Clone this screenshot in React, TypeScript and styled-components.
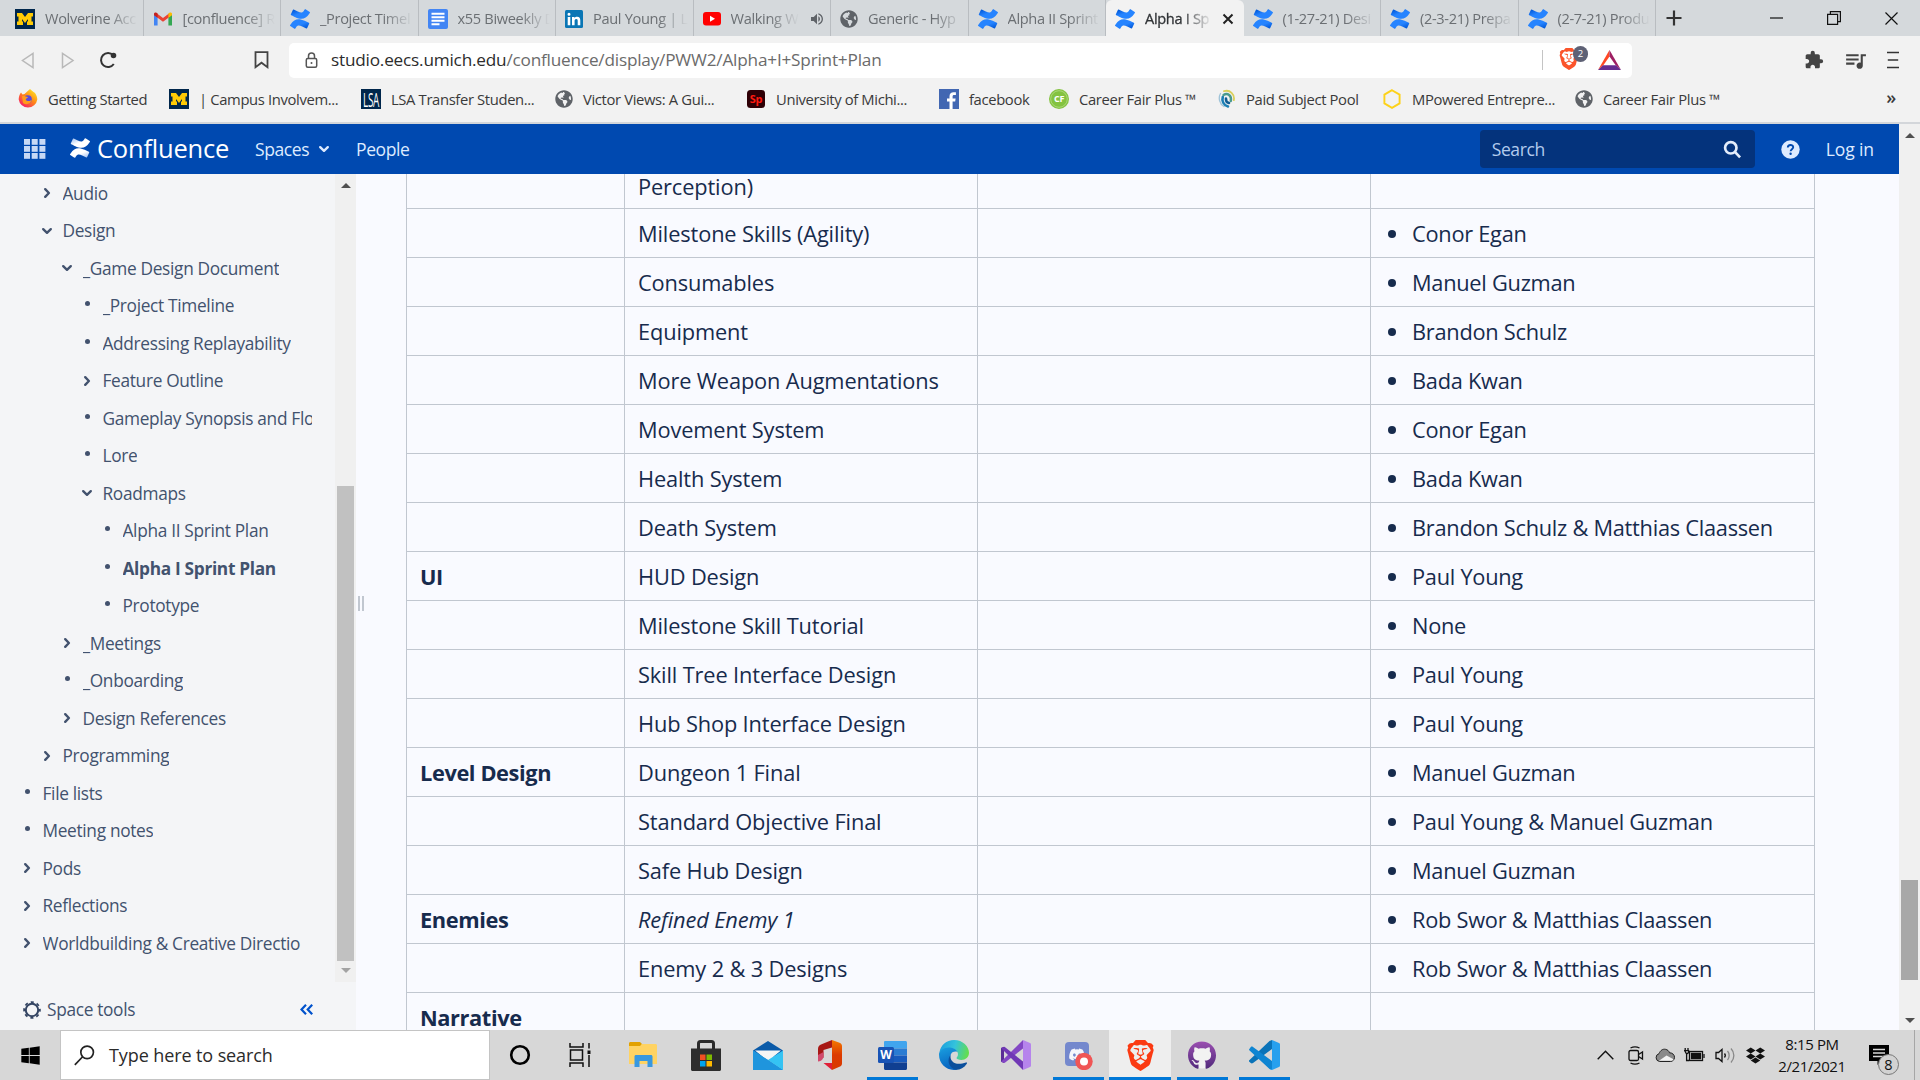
import React from 'react';
import styled, { createGlobalStyle, css } from 'styled-components';
import { FaDropbox, FaDiscord, FaWindows, FaGlobeAmericas } from 'react-icons/fa';
import { MdExtension, MdQueueMusic, MdVolumeUp } from 'react-icons/md';
import { SiBrave } from 'react-icons/si';

const Global = createGlobalStyle`
  * { box-sizing: border-box; }
  body { margin: 0; overflow: hidden; }
  svg { display: block; flex: none; }
`;

const Screen = styled.div`
  width: 1920px;
  height: 1080px;
  display: flex;
  flex-direction: column;
  overflow: hidden;
  font-family: 'Open Sans', 'Noto Sans', sans-serif;
  white-space: nowrap;
  color: #172b4d;
`;

/* ---------- browser chrome ---------- */

const TabStrip = styled.div`
  height: 36px;
  flex: none;
  display: flex;
  background: #d5d9dc;
  padding-left: 6px;
`;

const TabBox = styled.div<{ $active?: boolean }>`
  width: 137.5px;
  flex: none;
  display: flex;
  align-items: center;
  padding: 2px 5px 0 9px;
  border-right: 1px solid #b9bdc1;
  font-size: 14.6px;
  letter-spacing: -0.33px;
  color: #6b6f73;
  ${p => p.$active && css`
    background: #f2f2f2;
    border-radius: 6px 6px 0 0;
    border-right-color: transparent;
    color: #303336;
    padding-right: 9px;
  `}
`;

const TabTitle = styled.span<{ $active?: boolean; $short?: boolean }>`
  flex: 1;
  min-width: 0;
  margin: -2px ${p => (p.$short ? 10 : 0)}px 0 10px;
  overflow: hidden;
  -webkit-text-stroke: ${p => (p.$active ? '0.3px #303336' : '0')};
  mask-image: linear-gradient(to right, #000 calc(100% - 30px), transparent);
`;

const NewTab = styled.div`
  width: 36px;
  display: flex;
  align-items: center;
  justify-content: center;
`;

const WindowButtons = styled.div`
  margin-left: auto;
  display: flex;
  align-items: center;
`;

const WindowButton = styled.div`
  width: 57.5px;
  height: 36px;
  display: flex;
  align-items: center;
  justify-content: center;
`;

const Toolbar = styled.div`
  height: 48px;
  flex: none;
  display: flex;
  align-items: center;
  background: #f2f2f2;
`;

const NavIcons = styled.div`
  width: 289px;
  display: flex;
  align-items: center;
  padding-left: 20px;
`;

const NavSlot = styled.div<{ $w: number }>`
  width: ${p => p.$w}px;
`;

const Address = styled.div`
  width: 1343px;
  height: 35px;
  display: flex;
  align-items: center;
  background: #fff;
  border-radius: 5px;
  padding: 0 11px 0 16px;
`;

const Url = styled.div`
  flex: 1;
  margin: -2px 0 0 13px;
  font-size: 17.2px;
  letter-spacing: -0.2px;
  color: #6b6b6b;
  b { font-weight: 400; color: #2c2c2c; }
`;

const AddressRule = styled.div`
  width: 1px;
  height: 20px;
  background: #c4c4c4;
  margin-right: 15px;
`;

const ShieldBox = styled.div`
  position: relative;
  width: 40px;
  height: 24px;
`;

const ShieldCount = styled.span`
  position: absolute;
  left: 15px;
  top: -2px;
  width: 15px;
  height: 16px;
  border-radius: 8px;
  background: #5e6175;
  color: #fff;
  font-size: 9.5px;
  line-height: 16px;
  text-align: center;
`;

const ToolRight = styled.div`
  flex: 1;
  display: flex;
  align-items: center;
  justify-content: flex-end;
  gap: 19px;
  padding-right: 21px;
  color: #444;
`;

const Bookmarks = styled.div`
  height: 40px;
  flex: none;
  display: flex;
  align-items: center;
  background: #f2f2f2;
  border-bottom: 2px solid #d3d6da;
  padding: 0 0 8px 18px;
  font-size: 14.8px;
  letter-spacing: -0.36px;
  color: #3a3a3a;
`;

const BookmarkItem = styled.div<{ $w: number }>`
  width: ${p => p.$w}px;
  flex: none;
  display: flex;
  align-items: center;
  gap: 10px;
`;

const More = styled.div`
  margin-left: auto;
  padding-right: 24px;
  font-size: 18px;
  font-weight: 600;
  line-height: 18px;
  margin-top: -5px;
`;

/* ---------- confluence header ---------- */

const Body = styled.div`
  height: 906px;
  flex: none;
  display: flex;
`;

const Page = styled.div`
  width: 1899px;
  display: flex;
  flex-direction: column;
`;

const Header = styled.div`
  height: 50px;
  flex: none;
  display: flex;
  align-items: center;
  background: #0049b0;
  color: #deebff;
  padding: 0 25px 0 24px;
  font-size: 17.500px;
  letter-spacing: -0.4px;
`;

const Brand = styled.div`
  width: 185px;
  display: flex;
  align-items: center;
  gap: 7px;
  margin: -2px 0 0 24px;
  color: #fff;
  font-size: 25.5px;
  letter-spacing: -0.2px;
  line-height: 30px;
`;

const MenuItem = styled.div<{ $w: number }>`
  width: ${p => p.$w}px;
  display: flex;
  align-items: center;
  gap: 9px;
`;

const SearchBox = styled.div`
  width: 275px;
  height: 38px;
  margin-left: auto;
  display: flex;
  align-items: center;
  justify-content: space-between;
  background: #04337c;
  border-radius: 4px;
  padding: 0 13px 0 12px;
  color: #b3cbed;
`;

const Help = styled.div`
  margin: 0 26px;
`;

const LogIn = styled.div`
  letter-spacing: -0.1px;
`;

/* ---------- sidebar ---------- */

const Main = styled.div`
  flex: 1;
  min-height: 0;
  display: flex;
  background: #f9faff;
`;

const Sidebar = styled.div`
  width: 356px;
  flex: none;
  display: flex;
  flex-direction: column;
  background: #f4f5f7;
  color: #42526e;
  font-size: 17.3px;
  letter-spacing: -0.32px;
`;

const TreeArea = styled.div`
  height: 808px;
  display: flex;
`;

const Tree = styled.div`
  width: 335px;
  overflow: hidden;
  padding-top: 0.5px;
`;

const TreeRow = styled.div<{ $level: number; $bold?: boolean }>`
  height: 37.5px;
  display: flex;
  align-items: center;
  padding-left: ${p => 19.5 + p.$level * 20}px;
  font-weight: ${p => (p.$bold ? 700 : 400)};
`;

const Marker = styled.div`
  width: 15px;
  margin-right: 8px;
  display: flex;
  justify-content: center;
`;

const Dot = styled.div`
  width: 5px;
  height: 5px;
  border-radius: 50%;
  background: #42526e;
  margin-bottom: 4px;
`;

const TreeText = styled.div<{ $w?: number }>`
  overflow: hidden;
  width: ${p => (p.$w ? p.$w + 'px' : 'auto')};
`;

const Track = styled.div`
  width: 21px;
  flex: none;
  display: flex;
  flex-direction: column;
  align-items: center;
  background: #f0f0f0;
`;

const Gap = styled.div<{ $h: number }>`
  height: ${p => p.$h}px;
  display: flex;
  align-items: center;
`;

const Thumb = styled.div<{ $h: number; $c: string }>`
  width: 17px;
  height: ${p => p.$h}px;
  background: ${p => p.$c};
`;

const Arrow = styled.div<{ $up?: boolean; $c: string }>`
  border: 5px solid transparent;
  ${p => (p.$up ? `border-bottom: 5px solid ${p.$c}; border-top: 0;` : `border-top: 5px solid ${p.$c}; border-bottom: 0;`)}
`;

const SpaceTools = styled.div`
  flex: 1;
  display: flex;
  align-items: center;
  padding: 7px 43px 0 23px;
`;

const ToolsLabel = styled.span`
  margin: -1px 0 0 6px;
  flex: 1;
`;

const Splitter = styled.div`
  width: 50px;
  flex: none;
  padding: 422px 0 0 2px;
`;

const Grip = styled.div`
  width: 6px;
  height: 15px;
  border: solid #c1c7d0;
  border-width: 0 2px;
`;

/* ---------- table ---------- */

const Table = styled.div`
  width: 1409px;
  height: 856px;
  overflow: hidden;
  display: flex;
  flex-direction: column;
  border-left: 1px solid #c1c7d0;
  font-size: 21.8px;
`;

const Row = styled.div<{ $h?: number }>`
  height: ${p => p.$h || 49}px;
  flex: none;
  display: grid;
  grid-template-columns: 218px 353px 393px 444px;
  border-bottom: 1px solid #c1c7d0;
`;

const Cell = styled.div<{ $bold?: boolean; $italic?: boolean }>`
  border-right: 1px solid #c1c7d0;
  padding: 1px 0 0 13px;
  display: flex;
  align-items: center;
  min-height: 0;
  font-weight: ${p => (p.$bold ? 700 : 400)};
  font-style: ${p => (p.$italic ? 'italic' : 'normal')};
  letter-spacing: ${p => (p.$bold ? -0.4 : -0.14)}px;
`;

const OwnerCell = styled(Cell)`
  letter-spacing: -0.27px;
`;

const CutCell = styled(Cell)`
  align-items: flex-end;
  padding-bottom: 7px;
`;

const Bullet = styled.span`
  width: 8px;
  height: 8px;
  border-radius: 50%;
  background: #172b4d;
  margin: 0 16px 0 4px;
`;

/* ---------- taskbar ---------- */

const Taskbar = styled.div`
  height: 50px;
  flex: none;
  display: flex;
  background: #d7d7d7;
  color: #111;
`;

const Start = styled.div`
  width: 60px;
  display: flex;
  align-items: center;
  justify-content: center;
`;

const TaskSearch = styled.div`
  width: 430px;
  height: 50px;
  display: flex;
  align-items: center;
  gap: 14px;
  background: #fff;
  border: 1px solid #c4c4c4;
  padding-left: 13px;
  font-size: 18px;
  letter-spacing: -0.1px;
  color: #2b2b2b;
`;

const Apps = styled.div`
  display: flex;
`;

const TaskApp = styled.div<{ $active?: boolean; $running?: boolean; $w?: number }>`
  width: ${p => p.$w || 62}px;
  height: 50px;
  display: flex;
  align-items: center;
  justify-content: center;
  background-color: ${p => (p.$active ? '#eeeeee' : 'transparent')};
  background-image: ${p => (p.$running || p.$active ? 'linear-gradient(#0078d7, #0078d7)' : 'none')};
  background-size: ${p => (p.$active ? '62px' : '51px')} 3px;
  background-position: center bottom;
  background-repeat: no-repeat;
`;

const Tray = styled.div`
  margin-left: auto;
  display: flex;
  align-items: center;
`;

const TraySlot = styled.div<{ $w: number }>`
  width: ${p => p.$w}px;
  display: flex;
  justify-content: center;
`;

const Clock = styled.div`
  width: 84px;
  text-align: center;
  font-size: 15px;
  line-height: 22.5px;
  letter-spacing: -0.4px;
`;

const Notices = styled.div`
  position: relative;
  width: 60px;
  height: 50px;
  padding: 15px 0 0 15px;
`;

const NoticeCount = styled.span`
  position: absolute;
  left: 24px;
  top: 24px;
  width: 21px;
  height: 21px;
  border: 1px solid #777;
  border-radius: 50%;
  background: #d2d2d2;
  font-size: 14.5px;
  font-weight: 500;
  line-height: 19px;
  text-align: center;
`;

const ShowDesktop = styled.div`
  width: 6px;
  height: 50px;
  border-left: 1px solid #a6a6a6;
`;

/* ---------- icons ---------- */

const ConfluenceMark = ({ size = 20, from = '#0057d8', to = '#2684ff', id = 'cf' }) => (
  <svg width={size} height={size} viewBox="0 0 24 24">
    <defs>
      <linearGradient id={id + 'a'} x1="1" y1="1" x2="0.2" y2="0"><stop offset="0" stopColor={to} /><stop offset="0.6" stopColor={to} /><stop offset="1" stopColor={from} /></linearGradient>
      <linearGradient id={id + 'b'} x1="0" y1="0" x2="0.8" y2="1"><stop offset="0" stopColor={to} /><stop offset="0.6" stopColor={to} /><stop offset="1" stopColor={from} /></linearGradient>
    </defs>
    <path fill={`url(#${id}b)`} d="M.87 18.257c-.248.382-.53.875-.763 1.245a.764.764 0 0 0 .255 1.04l4.965 3.054a.764.764 0 0 0 1.058-.26c.199-.332.454-.763.733-1.221 1.967-3.247 3.945-2.853 7.508-1.146l4.957 2.337a.764.764 0 0 0 1.028-.382l2.364-5.346a.764.764 0 0 0-.382-1 599.851 599.851 0 0 1-4.965-2.361C10.911 10.97 5.224 11.185.87 18.257z" />
    <path fill={`url(#${id}a)`} d="M23.131 5.743c.249-.405.531-.875.764-1.25a.764.764 0 0 0-.256-1.034L18.675.404a.764.764 0 0 0-1.058.26c-.195.335-.451.763-.734 1.225-1.966 3.246-3.945 2.85-7.508 1.146L4.437.694a.764.764 0 0 0-1.027.382L1.046 6.422a.764.764 0 0 0 .382 1c1.039.49 3.105 1.467 4.965 2.361 6.698 3.246 12.392 3.029 16.738-4.04z" />
  </svg>
);

const BlockM = () => (
  <svg width="20" height="20" viewBox="0 0 20 20">
    <path fill="#00274c" d="M0 0h20v20H0z" />
    <path fill="#ffcb05" d="M2 4h5l3 4 3-4h5v3.5h-1.500v5H18V16h-6v-3.500h1V10l-3 4-3-4v2.500h1V16H2v-3.500h1.500v-5H2z" />
  </svg>
);

const Lsa = () => (
  <svg width="20" height="20" viewBox="0 0 20 20">
    <path fill="#00274c" d="M0 0h20v20H0z" />
    <text transform="translate(10 18) scale(.62 1.300)" textAnchor="middle" fontFamily="Open Sans" fontSize="16" fontWeight="500" letterSpacing="-0.5" fill="#fff">LSA</text>
  </svg>
);

const SpIcon = () => (
  <svg width="19" height="18" viewBox="0 0 19 18">
    <rect width="18" height="18" rx="3.500" fill="#2e0006" />
    <text x="9" y="13" textAnchor="middle" fontFamily="Open Sans" fontSize="11" fontWeight="700" letterSpacing="-0.3" fill="#ff1a10">Sp</text>
  </svg>
);

const FacebookF = () => (
  <svg width="20" height="20" viewBox="0 0 20 20">
    <path fill="#4267b2" d="M0 0h20v20H0z" />
    <path fill="#fff" d="M10.500 20v-7.600H8V9.400h2.500V7.200c0-2.600 1.600-4 4-4 1.100 0 2.100.1 2.400.1v2.800h-1.700c-1.300 0-1.600.6-1.600 1.500v1.800h3l-.4 3h-2.600V20z" />
  </svg>
);

const CareerFair = () => (
  <svg width="20" height="20" viewBox="0 0 20 20">
    <circle cx="10" cy="10" r="10" fill="#84c340" /><circle cx="10" cy="10" r="8.300" fill="none" stroke="#b4dc87" strokeWidth=".8" />
    <text x="10" y="13.400" textAnchor="middle" fontFamily="Open Sans" fontSize="9" fontWeight="700" letterSpacing="-0.3" fill="#fff">CF</text>
  </svg>
);

const Gmail = () => (
  <svg width="20" height="20" viewBox="0 0 20 20">
    <path fill="#4285f4" d="M1 5v11.500h3.600V8z" />
    <path fill="#34a853" d="M19 5v11.500h-3.600V8z" />
    <path fill="#ea4335" d="M1 5.500 3 3.800 10 9l7-5.200 2 1.700-3.600 3.300L10 12.800 4.600 8.800z" />
    <path fill="#c5221f" d="M1 5c0-1.700 2-2 3.600-.6V8.800L1 6.200z" />
    <path fill="#fbbc04" d="M19 5c0-1.700-2-2-3.600-.6V8.800L19 6.200z" />
  </svg>
);

const Docs = () => (
  <svg width="20" height="20" viewBox="0 0 20 20">
    <rect width="20" height="20" rx="2" fill="#4285f4" />
    <path stroke="#fff" strokeWidth="1.900" d="M3.500 4.800h13M3.500 8.300h13M3.500 11.800h13M3.500 15.300h8" />
  </svg>
);

const LinkedIn = () => (
  <svg width="18" height="18" viewBox="0 0 18 18">
    <rect width="18" height="18" rx="1.500" fill="#0a76b5" />
    <path fill="#fff" d="M2.700 7h2.600v8.300H2.700zM4 2.700a1.500 1.500 0 1 1 0 3 1.500 1.500 0 0 1 0-3zM7 7h2.500v1.200c.5-.9 1.500-1.400 2.600-1.400 2.500 0 3.200 1.600 3.200 3.800v4.700h-2.600v-4.200c0-1.200-.2-2.100-1.500-2.100s-1.600 1-1.600 2.100v4.200H7z" />
  </svg>
);

const YouTube = () => (
  <svg width="18" height="20" viewBox="0 0 18 20">
    <rect y="3" width="18" height="13.500" rx="3" fill="#f00" />
    <path fill="#fff" d="M7 6.800v6l5-3z" />
  </svg>
);

const Firefox = () => (
  <svg width="20" height="20" viewBox="0 0 20 20">
    <defs><linearGradient id="ff" x1="0.9" y1="0.1" x2="0.2" y2="1"><stop offset="0" stopColor="#ffe226" /><stop offset="0.45" stopColor="#ff8a16" /><stop offset="1" stopColor="#f5156c" /></linearGradient></defs>
    <path fill="url(#ff)" d="M12 0c1.500 1.500 3 2.500 5 4 1.300 1.700 2.300 4 2.300 6.500A9.400 9.400 0 0 1 .7 10.500C.7 8 1.500 5.500 3 3.500l1.500 2 2-.5z" />
    <circle cx="9.800" cy="10.200" r="4" fill="#5b4bdb" />
    <path fill="#ff9b1a" d="M4 7.500c2-1 4 .2 6 .6-.3 1.200-2 1.300-2.300 2.300 1 2.300 4.300 2 6 .4-.6 4-5.500 5.700-8.700 3.200z" />
  </svg>
);

const Hexagon = () => (
  <svg width="20" height="20" viewBox="0 0 20 20"><path fill="none" stroke="#fdd21a" strokeWidth="1.900" d="M10 1.200 17.600 5.600v8.800L10 18.800 2.400 14.400V5.600z" /></svg>
);

const Swirl = () => (
  <svg width="18" height="20" viewBox="0 0 18 20" fill="none" strokeLinecap="round">
    <path stroke="#9fc3d8" strokeWidth="1.300" d="M2.500 4.500C0 9 1.500 15 6 17.500" />
    <path stroke="#1c7fb4" strokeWidth="2.600" d="M4.800 8c-1.300 4 .8 8.200 5.200 9.500" />
    <path stroke="#d9cf5a" strokeWidth="1.800" d="M6 2.200c6-2 11 3.300 9.800 9" />
    <path stroke="#4b9a8e" strokeWidth="2.400" d="M5.500 6c4-2.500 8.500.5 7.300 6" />
    <path stroke="#115d94" strokeWidth="2.600" d="M8 9.500c-.3 2.300.8 4 3 4.500" />
  </svg>
);

const Chevron = ({ down = false, color = '#42526e' }) => (
  <svg width="12" height="12" viewBox="0 0 12 12" fill="none" stroke={color} strokeWidth="2.400" strokeLinecap="round" strokeLinejoin="round">
    <path d={down ? 'M2.200 4.200 6 7.800l3.800-3.600' : 'M4.200 2.200 7.900 6 4.200 9.800'} />
  </svg>
);

const AppGrid = () => (
  <svg width="22" height="20" viewBox="0 0 22 20" fill="#c6d8f5">
    {[0, 7, 14].map(y => [0, 7.7, 15.400].map(x => <rect key={x + '-' + y} x={x} y={y} width="6" height="5.800" />))}
  </svg>
);

const BraveTriangle = () => (
  <svg width="23" height="20" viewBox="0 0 23 20">
    <path fill="#ff4724" d="M11.500 0v6.500L5.500 15 0 20z" />
    <path fill="#9e1f63" d="M11.500 0 23 20l-5.500-5-6-8.500z" />
    <path fill="#662d91" d="M0 20l5-4.800h13L23 20z" />
  </svg>
);

const Folder = () => (
  <svg width="28" height="26" viewBox="0 0 28 26">
    <path fill="#e2a100" d="M0 1.500C0 .6.6 0 1.500 0H11l2 2-2 3.500H0z" />
    <path fill="#ffd363" d="M0 4h11l2-2h13.500c.9 0 1.500.6 1.500 1.500V22H0z" />
    <path fill="#3898e0" d="M5.500 25V14.500c0-1 .7-1.500 1.500-1.500h15c.8 0 1.500.6 1.500 1.500V25h-5v-6h-8v6z" />
  </svg>
);

const Store = () => (
  <svg width="30" height="31" viewBox="0 0 30 31">
    <path fill="none" stroke="#2b2b2b" strokeWidth="3" d="M7.500 9V3.500c0-1.200.8-2 2-2h11c1.200 0 2 .8 2 2V9" />
    <path fill="#2d2d2d" d="M0 8.500h30v21c0 .8-.7 1.500-1.500 1.500h-27C.7 31 0 30.300 0 29.500z" />
    <path fill="#f25022" d="M9 14.500h5.500V20H9z" /><path fill="#7fba00" d="M15.500 14.500H21V20h-5.500z" />
    <path fill="#00a4ef" d="M9 21h5.500v5.500H9z" /><path fill="#ffb900" d="M15.500 21H21v5.500h-5.500z" />
  </svg>
);

const Mail = () => (
  <svg width="30" height="29" viewBox="0 0 30 29">
    <path fill="#0a5aa8" d="M0 9.500 15 0l15 9.500-3 6H3z" />
    <path fill="#f5f5f5" d="M2 9.500h26L15 20z" />
    <path fill="#1a9de0" d="M0 9.500 15 19l15 10H0z" />
    <path fill="#35c3f3" d="M30 9.500 15 19l15 10z" />
    <path fill="#1f95dd" d="M0 9.500V29h30L15 19z" />
  </svg>
);

const Office = () => (
  <svg width="24" height="30" viewBox="0 0 24 30">
    <defs><linearGradient id="of" x1="0" y1="0" x2="0" y2="1"><stop offset="0" stopColor="#f47a00" /><stop offset="0.5" stopColor="#dc3a00" /><stop offset="1" stopColor="#d83b01" /></linearGradient></defs>
    <path fill="#a81815" d="M14 0 3 4.500C1 5.500 0 6.500 0 9v11.500l5.500-3V10L14 7.500z" />
    <path fill="#d14a6c" d="M0 15v6.500c2 0 4-.8 5.500-4V12z" />
    <path fill="url(#of)" d="m14 0 7.500 2.800C23 3.400 24 4.500 24 6v17.500c0 1.600-.8 2.700-2.500 3.200L14 30z" />
    <path fill="#e02038" d="M5.500 23H14v7z" />
  </svg>
);

const Word = () => (
  <svg width="29" height="29" viewBox="0 0 29 29">
    <path fill="#41a5ee" d="M7 0h20.500c.8 0 1.500.6 1.500 1.500V7.500H6V1.500C6 .6 6.400 0 7 0z" />
    <path fill="#2b7cd3" d="M6 7.500h23v7H6z" /><path fill="#185abd" d="M6 14.500h23v7H6z" />
    <path fill="#103f91" d="M6 21.500h23v6c0 .8-.6 1.500-1.500 1.500h-20C6.600 29 6 28.300 6 27.500z" />
    <rect y="6" width="16" height="16" rx="1.500" fill="#1853b5" />
    <text x="8" y="18.300" textAnchor="middle" fontFamily="Open Sans" fontSize="12" fontWeight="700" fill="#fff">W</text>
  </svg>
);

const Edge = () => (
  <svg width="30" height="30" viewBox="0 0 30 30">
    <defs>
      <linearGradient id="eg" x1="0" y1="0.3" x2="1" y2="0.5"><stop offset="0" stopColor="#1c9fdd" /><stop offset="0.5" stopColor="#34c3dc" /><stop offset="1" stopColor="#64de4c" /></linearGradient>
      <linearGradient id="eb" x1="0" y1="0" x2="0.3" y2="1"><stop offset="0" stopColor="#1aa0e0" /><stop offset="1" stopColor="#0864c0" /></linearGradient>
    </defs>
    <path fill="url(#eg)" d="M.5 12.500C1.500 5 7.500 0 15 0c9 0 15 6.500 15 12.800 0 4.500-3.500 7.200-7.500 7.200-3 0-5-.9-5-1.900 0-.8 1.500-1.300 1.500-4.100 0-3-3.300-5.500-7-5.500-5.500 0-9.500 1-11.500 4z" />
    <path fill="url(#eb)" d="M0 14.500C0 10 5.500 7 11 7.500c3.500.3 6.500 2 7.500 4.500-2-1-5-.5-6.500 2-2.500 5 .5 12.500 7 15.500C9.500 32 0 25 0 14.500z" />
    <path fill="#0b4f9c" d="M11.500 15c-1 7 5.500 11 15.500 7.500 1-.3 1.300.3.800 1.200C25 28 21 30 16.500 29.800 9 27 8 19.500 11.500 15z" />
  </svg>
);

const VisualStudio = () => (
  <svg width="30" height="30" viewBox="0 0 30 30">
    <path fill="#5a2d96" d="M0 8l3-1.200V23l-3-1.200z" />
    <path fill="#8347c4" d="M0 21.800 22 0v8.500L3.500 23z" /><path fill="#7038b5" d="M0 8l3.500-1.200L22 21.500V30z" />
    <path fill="#b684ec" d="m22 0 7 3c.6.300 1 .8 1 1.500v21c0 .7-.4 1.200-1 1.500l-7 3z" />
  </svg>
);

const VSCode = () => (
  <svg width="31" height="30" viewBox="0 0 31 30">
    <path fill="#0a73b8" d="M0 20.500 20.500 1 23 0v9L4 23c-.8.6-1.500.6-2.200 0L.3 21.700C-.1 21.300-.1 20.900 0 20.500z" />
    <path fill="#0e85d2" d="M0 9.500 1.800 7c.7-.600 1.400-.6 2.200 0l19 14v9l-2.500-1L.3 10.300z" />
    <path fill="#27a0ee" d="M23 0 30 3c.6.300 1 .8 1 1.500v21c0 .7-.4 1.200-1 1.500l-7 3c-1 .3-1.800.2-2.500-.5 1 .5 2.500-.1 2.500-1.500z" />
  </svg>
);

const Discord = () => (
  <svg width="30" height="30" viewBox="0 0 30 30">
    <rect x="2" y="2" width="24" height="24" rx="4" fill="#7488cd" />
    <g transform="translate(5.500 6)"><FaDiscord size={17} color="#f4f5fb" /></g>
    <circle cx="21" cy="21.500" r="8.700" fill="#f05555" /><circle cx="21" cy="21.500" r="4" fill="#fff" />
  </svg>
);

const GitHub = () => (
  <svg width="30" height="30" viewBox="0 0 30 30">
    <defs><linearGradient id="gh" x1="0" y1="0" x2="0" y2="1"><stop offset="0" stopColor="#9a4fb0" /><stop offset="1" stopColor="#512a7c" /></linearGradient></defs>
    <circle cx="15" cy="15" r="13.500" fill="#f2f2f2" />
    <path transform="translate(1 1) scale(.0565)" fill="url(#gh)" d="M165.900 397.400c0 2-2.300 3.600-5.200 3.600-3.300.3-5.600-1.300-5.600-3.600 0-2 2.300-3.600 5.200-3.600 3-.3 5.600 1.300 5.600 3.600zM244.800 8C106.100 8 0 113.300 0 252c0 110.900 69.800 205.800 169.500 239.200 12.800 2.300 17.300-5.600 17.300-12.100 0-6.200-.3-40.400-.3-61.400 0 0-70 15-84.700-29.800 0 0-11.400-29.100-27.800-36.600 0 0-22.900-15.700 1.600-15.400 0 0 24.900 2 38.600 25.800 21.900 38.600 58.600 27.500 72.900 20.900 2.300-16 8.800-27.100 16-33.700-55.900-6.200-112.300-14.300-112.300-110.500 0-27.500 7.600-41.300 23.600-58.900-2.600-6.500-11.100-33.300 2.600-67.900 20.900-6.500 69 27 69 27 20-5.600 41.500-8.500 62.800-8.500s42.800 2.900 62.800 8.500c0 0 48.100-33.600 69-27 13.700 34.700 5.200 61.400 2.600 67.900 16 17.700 25.800 31.500 25.800 58.900 0 96.500-58.900 104.200-114.800 110.500 9.200 7.900 17 22.900 17 46.400 0 33.700-.3 75.400-.3 83.600 0 6.500 4.600 14.400 17.300 12.100C428.200 457.800 496 362.900 496 252 496 113.300 383.500 8 244.800 8z" />
  </svg>
);

const TaskViewIcon = () => (
  <svg width="22" height="24" viewBox="0 0 22 24" fill="none" stroke="#111" strokeWidth="1.500">
    <path d="M1 0v4h13V0M1 24v-4h13v4M1.500 7h12v10h-12zM20 0v5.500M20 12v12" /><path strokeWidth="3" d="M20 7.500v3.500" />
  </svg>
);

const Loupe = ({ size = 21, w = 1.600, flip = false, color = '#222' }) => (
  <svg width={size} height={size} viewBox="0 0 20 20" fill="none" stroke={color} strokeWidth={w}>
    {flip ? <><circle cx="12.500" cy="7" r="6" /><path d="M8.200 11.200 .8 19" /></> : <><circle cx="8.200" cy="8.200" r="6" /><path d="m12.500 12.500 5.500 5.800" /></>}
  </svg>
);

const Gear = () => (
  <svg width="18" height="18" viewBox="0 0 18 18" fill="none" stroke="#344563">
    <circle cx="9" cy="9" r="6.200" strokeWidth="2" />
    <circle cx="9" cy="9" r="7.900" strokeWidth="1.800" strokeDasharray="3.100 3.100" strokeDashoffset="1.500" />
  </svg>
);

/* ---------- data ---------- */

const globe = <FaGlobeAmericas size={18} color="#5f6368" />;

const tabs: { icon: React.ReactNode; title: string; active?: boolean; sound?: boolean }[] = [
  { icon: <BlockM />, title: 'Wolverine Acc' },
  { icon: <Gmail />, title: '[confluence] R' },
  { icon: <ConfluenceMark id="t1" />, title: '_Project Timel' },
  { icon: <Docs />, title: 'x55 Biweekly D' },
  { icon: <LinkedIn />, title: 'Paul Young | L' },
  { icon: <YouTube />, title: 'Walking W', sound: true },
  { icon: globe, title: 'Generic - Hyp' },
  { icon: <ConfluenceMark id="t2" />, title: 'Alpha II Sprint' },
  { icon: <ConfluenceMark id="t3" />, title: 'Alpha I Sp', active: true },
  { icon: <ConfluenceMark id="t4" />, title: '(1-27-21) Desi' },
  { icon: <ConfluenceMark id="t5" />, title: '(2-3-21) Prepa' },
  { icon: <ConfluenceMark id="t6" />, title: '(2-7-21) Produ' },
];

const bookmarks: [React.ReactNode, string, number][] = [
  [<Firefox />, 'Getting Started', 151],
  [<BlockM />, '| Campus Involvem...', 192],
  [<Lsa />, 'LSA Transfer Studen...', 194],
  [globe, 'Victor Views: A Gui...', 192],
  [<SpIcon />, 'University of Michi...', 192],
  [<FacebookF />, 'facebook', 110],
  [<CareerFair />, 'Career Fair Plus ™', 169],
  [<Swirl />, 'Paid Subject Pool', 164],
  [<Hexagon />, 'MPowered Entrepre...', 193],
  [globe, 'Career Fair Plus ™', 160],
];

type Kind = 'open' | 'closed' | 'leaf';
const tree: [number, Kind, string, number?][] = [
  [1, 'closed', 'Audio'],
  [1, 'open', 'Design'],
  [2, 'open', '_Game Design Document'],
  [3, 'leaf', '_Project Timeline'],
  [3, 'leaf', 'Addressing Replayability'],
  [3, 'closed', 'Feature Outline'],
  [3, 'leaf', 'Gameplay Synopsis and Flo', 209],
  [3, 'leaf', 'Lore'],
  [3, 'open', 'Roadmaps'],
  [4, 'leaf', 'Alpha II Sprint Plan'],
  [4, 'leaf', 'Alpha I Sprint Plan'],
  [4, 'leaf', 'Prototype'],
  [2, 'closed', '_Meetings'],
  [2, 'leaf', '_Onboarding'],
  [2, 'closed', 'Design References'],
  [1, 'closed', 'Programming'],
  [0, 'leaf', 'File lists'],
  [0, 'leaf', 'Meeting notes'],
  [0, 'closed', 'Pods'],
  [0, 'closed', 'Reflections'],
  [0, 'closed', 'Worldbuilding & Creative Directio', 260],
];

const rows: [string, string, string][] = [
  ['', 'Milestone Skills (Agility)', 'Conor Egan'],
  ['', 'Consumables', 'Manuel Guzman'],
  ['', 'Equipment', 'Brandon Schulz'],
  ['', 'More Weapon Augmentations', 'Bada Kwan'],
  ['', 'Movement System', 'Conor Egan'],
  ['', 'Health System', 'Bada Kwan'],
  ['', 'Death System', 'Brandon Schulz & Matthias Claassen'],
  ['UI', 'HUD Design', 'Paul Young'],
  ['', 'Milestone Skill Tutorial', 'None'],
  ['', 'Skill Tree Interface Design', 'Paul Young'],
  ['', 'Hub Shop Interface Design', 'Paul Young'],
  ['Level Design', 'Dungeon 1 Final', 'Manuel Guzman'],
  ['', 'Standard Objective Final', 'Paul Young & Manuel Guzman'],
  ['', 'Safe Hub Design', 'Manuel Guzman'],
  ['Enemies', 'Refined Enemy 1', 'Rob Swor & Matthias Claassen'],
  ['', 'Enemy 2 & 3 Designs', 'Rob Swor & Matthias Claassen'],
  ['Narrative', '', ''],
];

export default function App() {
  return (
    <Screen>
      <Global />
      <TabStrip>
        {tabs.map(t => (
          <TabBox key={t.title} $active={t.active}>
            {t.icon}
            <TabTitle $active={t.active} $short={t.active || t.sound}>{t.title}</TabTitle>
            {t.sound && <MdVolumeUp size={16} color="#5f6368" />}
            {t.active && (
              <svg width="12" height="12" viewBox="0 0 12 12" stroke="#222" strokeWidth="2"><path d="m1.500 1.500 9 9m0-9-9 9" /></svg>
            )}
          </TabBox>
        ))}
        <NewTab>
          <svg width="16" height="16" viewBox="0 0 16 16" stroke="#333" strokeWidth="2.200"><path d="M8 .5v15M.5 8h15" /></svg>
        </NewTab>
        <WindowButtons>
          <WindowButton><svg width="13" height="13" viewBox="0 0 13 13" stroke="#111" strokeWidth="1.200"><path d="M0 6h13" /></svg></WindowButton>
          <WindowButton><svg width="14" height="14" viewBox="0 0 14 14" fill="none" stroke="#111" strokeWidth="1.200"><path d="M.6 3.400h10v10H.6zM3.400 3.400V.6h10v10h-2.800" /></svg></WindowButton>
          <WindowButton><svg width="13" height="13" viewBox="0 0 13 13" stroke="#111" strokeWidth="1.200"><path d="m.5.5 12 12m0-12-12 12" /></svg></WindowButton>
        </WindowButtons>
      </TabStrip>

      <Toolbar>
        <NavIcons>
          <NavSlot $w={41}><svg width="15" height="17" viewBox="0 0 15 17" fill="none" stroke="#b9b9b9" strokeWidth="1.500"><path d="M13 1.500v14L2.500 8.500z" /></svg></NavSlot>
          <NavSlot $w={38}><svg width="15" height="17" viewBox="0 0 15 17" fill="none" stroke="#b9b9b9" strokeWidth="1.500"><path d="M1.500 1.500v14L12 8.500z" /></svg></NavSlot>
          <NavSlot $w={155}><svg width="18" height="18" viewBox="0 0 18 18" fill="none" stroke="#333" strokeWidth="2"><path d="M14.800 13a7 7 0 1 1-.6-8.700" /><circle cx="14.500" cy="4.500" r="1.800" fill="#333" /></svg></NavSlot>
          <svg width="15" height="18" viewBox="0 0 15 18" fill="none" stroke="#444" strokeWidth="1.800"><path d="M1.500 1.200h12v15l-6-4.500-6 4.500z" /></svg>
        </NavIcons>
        <Address>
          <svg width="13" height="17" viewBox="0 0 13 17" fill="none" stroke="#555" strokeWidth="1.500"><rect x="1.300" y="6.500" width="10.400" height="8.800" rx="1.500" /><path d="M3.500 6.500V4a3 3 0 0 1 6 0v2.500" /><circle cx="6.500" cy="11" r="1" fill="#555" stroke="none" /></svg>
          <Url><b>studio.eecs.umich.edu</b>/confluence/display/PWW2/Alpha+I+Sprint+Plan</Url>
          <AddressRule />
          <ShieldBox>
            <SiBrave size={22} color="#fb542b" />
            <ShieldCount>2</ShieldCount>
          </ShieldBox>
          <BraveTriangle />
        </Address>
        <ToolRight>
          <MdExtension size={20} />
          <MdQueueMusic size={25} />
          <svg width="12" height="18" viewBox="0 0 12 18" stroke="#333" strokeWidth="1.700"><path d="M0 1.500h12M.8 9h10.400M0 16.500h12" /></svg>
        </ToolRight>
      </Toolbar>

      <Bookmarks>
        {bookmarks.map(([icon, label, w], i) => (
          <BookmarkItem key={i} $w={w}>{icon}<span>{label}</span></BookmarkItem>
        ))}
        <More>»</More>
      </Bookmarks>

      <Body>
        <Page>
          <Header>
            <AppGrid />
            <Brand><ConfluenceMark size={20} from="#a9c6f2" to="#ffffff" id="hd" />Confluence</Brand>
            <MenuItem $w={101}>Spaces<Chevron down color="#deebff" /></MenuItem>
            <MenuItem $w={80}>People</MenuItem>
            <SearchBox>Search<Loupe size={19} w={2.800} color="#e4edfb" /></SearchBox>
            <Help>
              <svg width="19" height="19" viewBox="0 0 19 19"><circle cx="9.500" cy="9.500" r="9.200" fill="#deebff" /><path fill="none" stroke="#0049b0" strokeWidth="1.900" d="M6.800 7.500c0-3.400 5.400-3.300 5.400-.2 0 1.900-2.600 1.900-2.600 4" /><circle cx="9.600" cy="13.700" r="1.200" fill="#0049b0" /></svg>
            </Help>
            <LogIn>Log in</LogIn>
          </Header>
          <Main>
            <Sidebar>
              <TreeArea>
                <Tree>
                  {tree.map(([level, kind, label, w]) => (
                    <TreeRow key={label} $level={level} $bold={label === 'Alpha I Sprint Plan'}>
                      <Marker>{kind === 'leaf' ? <Dot /> : <Chevron down={kind === 'open'} />}</Marker>
                      <TreeText $w={w}>{label}</TreeText>
                    </TreeRow>
                  ))}
                </Tree>
                <Track>
                  <Gap $h={23}><Arrow $up $c="#505050" /></Gap>
                  <Gap $h={289} />
                  <Thumb $h={475} $c="#c1c1c1" />
                  <Gap $h={19}><Arrow $c="#a3a3a3" /></Gap>
                </Track>
              </TreeArea>
              <SpaceTools>
                <Gear />
                <ToolsLabel>Space tools</ToolsLabel>
                <svg width="13" height="11" viewBox="0 0 13 11" fill="none" stroke="#0052cc" strokeWidth="2.200"><path d="M6 .8 1.500 5.500 6 10.200M12.200.8 7.700 5.500l4.500 4.700" /></svg>
              </SpaceTools>
            </Sidebar>
            <Splitter><Grip /></Splitter>
            <Table>
              <Row $h={35}><Cell /><CutCell>Perception)</CutCell><Cell /><Cell /></Row>
              {rows.map(([area, task, owner], i) => (
                <Row key={i}>
                  <Cell $bold>{area}</Cell>
                  <Cell $italic={task.startsWith('Refined')}>{task}</Cell>
                  <Cell />
                  <OwnerCell>{owner && <><Bullet />{owner}</>}</OwnerCell>
                </Row>
              ))}
            </Table>
          </Main>
        </Page>
        <Track>
          <Gap $h={22}><Arrow $up $c="#505050" /></Gap>
          <Gap $h={734} />
          <Thumb $h={100} $c="#a8a8a8" />
          <Gap $h={30} />
          <Gap $h={20}><Arrow $c="#505050" /></Gap>
        </Track>
      </Body>

      <Taskbar>
        <Start><FaWindows size={21} color="#000" /></Start>
        <TaskSearch><Loupe flip />Type here to search</TaskSearch>
        <Apps>
          <TaskApp $w={60}><svg width="22" height="22" viewBox="0 0 22 22"><circle cx="11" cy="11" r="8.800" fill="none" stroke="#000" strokeWidth="2.600" /></svg></TaskApp>
          <TaskApp $w={60}><TaskViewIcon /></TaskApp>
          <TaskApp $w={65}><Folder /></TaskApp>
          <TaskApp><Store /></TaskApp>
          <TaskApp><Mail /></TaskApp>
          <TaskApp><Office /></TaskApp>
          <TaskApp $running><Word /></TaskApp>
          <TaskApp><Edge /></TaskApp>
          <TaskApp><VisualStudio /></TaskApp>
          <TaskApp $running><Discord /></TaskApp>
          <TaskApp $active><SiBrave size={31} color="#fb3a12" /></TaskApp>
          <TaskApp $running><GitHub /></TaskApp>
          <TaskApp $running><VSCode /></TaskApp>
        </Apps>
        <Tray>
          <TraySlot $w={30}><svg width="17" height="10" viewBox="0 0 17 10" fill="none" stroke="#111" strokeWidth="1.400"><path d="m.7 9.300 7.800-8 7.800 8" /></svg></TraySlot>
          <TraySlot $w={31}><svg width="16" height="19" viewBox="0 0 16 19" fill="none" stroke="#111" strokeWidth="1.300"><rect x="1" y="4.500" width="9.500" height="10" rx="1.500" /><path d="M10.500 8.500 14.500 6v7l-4-2.500M2.500 2c3-1.500 6-1.500 9 0M2.500 17c3 1.500 6 1.500 9 0" /></svg></TraySlot>
          <TraySlot $w={28}><svg width="20" height="15" viewBox="0 0 20 15"><path fill="#8a8a8a" stroke="#222" d="M4.500 13.500A4 4 0 0 1 4 5.700C5.500 2 8 .8 10.500 1.300c2 .4 3.500 1.700 4 3.500 3 0 5 2 5 4.500s-2 4.200-4 4.200z" /><path fill="#f3f3f3" d="m4 12.800 7.500-5.300 7 3.800c-.5 1-1.500 1.500-3 1.500z" /></svg></TraySlot>
          <TraySlot $w={31}><svg width="21" height="14" viewBox="0 0 21 14" fill="none" stroke="#111" strokeWidth="1.300"><rect x="5.500" y="3.500" width="13" height="9" /><path fill="#111" d="M7.500 5.500h9v5h-9z" /><path d="M20 6v4" /><path d="M1.200 0v2.500M4 0v2.500M.6 2.600h4v2L2.600 6zM2.600 6v6.500H5" /></svg></TraySlot>
          <TraySlot $w={30}><svg width="21" height="19" viewBox="0 0 21 19" fill="none" stroke="#111" strokeWidth="1.300"><path d="M1 6.500h2.500L7 3.500v12l-3.500-3H1z" /><path d="M9.500 7.500c1 1.200 1 2.800 0 4" /><path stroke="#888" d="M12.500 5c2.200 2.500 2.200 6.500 0 9M16 2.500c3.800 4 3.800 10 0 14" /></svg></TraySlot>
          <TraySlot $w={30}><FaDropbox size={19} color="#111" /></TraySlot>
          <Clock>8:15 PM<br />2/21/2021</Clock>
          <Notices>
            <svg width="20" height="20" viewBox="0 0 20 20"><path fill="#000" d="M0 0h20v16h-8l-3.500 4V16H0z" /><path stroke="#d7d7d7" strokeWidth="1.300" d="M4 4.500h12M4 8h12M4 11.500h12" /></svg>
            <NoticeCount>8</NoticeCount>
          </Notices>
          <ShowDesktop />
        </Tray>
      </Taskbar>
    </Screen>
  );
}
